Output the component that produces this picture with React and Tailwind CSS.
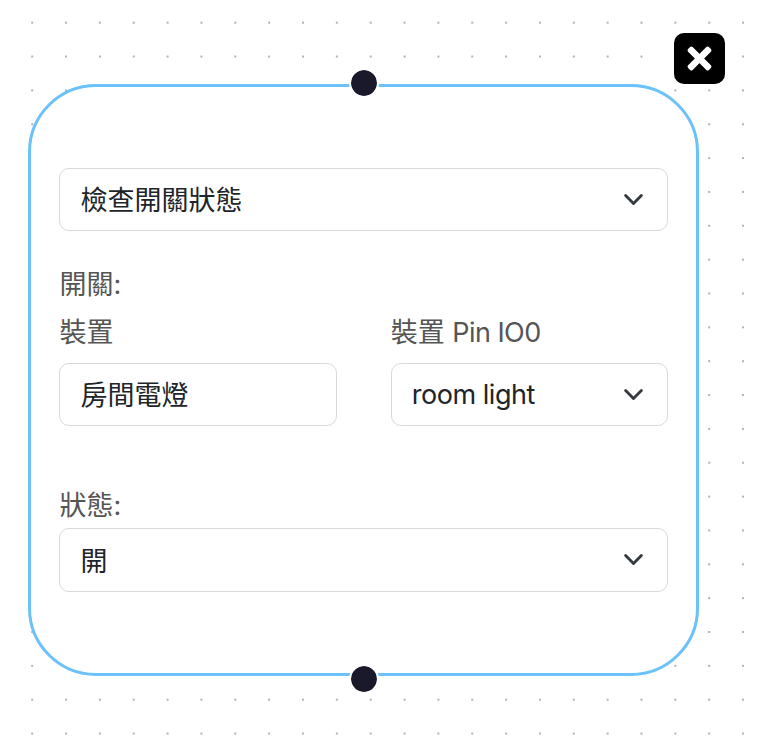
const fontStack = "font-['Inter','Noto_Sans_CJK_TC',sans-serif]";

function Chevron() {
  return (
    <svg className="-mt-px h-[21px] w-[21px] shrink-0" viewBox="0 0 16 16" fill="none">
      <path d="m2 5 6 6 6-6" stroke="#343a40" strokeWidth="2.2" strokeLinecap="round" strokeLinejoin="round" />
    </svg>
  );
}

function Field({ value, select, latin, className }) {
  return (
    <div className={`flex items-center justify-between rounded-[10px] border-[1.4px] border-[#d6d9de] bg-white pr-[23px] pl-5 text-[#212529] ${className}`}>
      <span className={`whitespace-nowrap ${latin ? "pt-0.5 tracking-[-0.45px]" : "pt-1"}`}>{value}</span>
      {select && <Chevron />}
    </div>
  );
}

function Label({ children }) {
  return <div className="h-10 pt-px leading-10 whitespace-nowrap text-[#555]">{children}</div>;
}

function DotGrid() {
  return (
    <svg className="absolute inset-0 h-full w-full">
      <pattern id="dots" x="31.2" y="21.7" width="33.85" height="33.85" patternUnits="userSpaceOnUse">
        <circle cx="1" cy="1" r="1" fill="#989898" />
      </pattern>
      <rect width="100%" height="100%" fill="url(#dots)" />
    </svg>
  );
}

function Handle() {
  return <div className="h-[30px] w-[30px] rounded-full border-2 border-white bg-[#1a192b] bg-clip-padding" />;
}

export default function App() {
  return (
    <div className={`relative h-[742px] w-[762px] overflow-hidden bg-white text-[27px] ${fontStack}`}>
      <DotGrid />
      <section className="absolute top-[84px] left-[28.4px] flex h-[592px] w-[670.6px] flex-col justify-between rounded-[68px] border-[3px] border-[#6bc2fa] bg-white px-7 pt-[81px] pb-[81px]">
        <Field value="檢查開關狀態" select className="h-[63px]" />
        <div className="-mt-[26px] flex flex-col gap-2">
          <Label>開關:</Label>
          <div className="grid grid-cols-2 gap-[54px]">
            <div className="flex flex-col gap-[11px]">
              <Label>裝置</Label>
              <Field value="房間電燈" className="h-[63px]" />
            </div>
            <div className="flex flex-col gap-[11px]">
              <Label>
                裝置 <span className="tracking-[-0.55px]">Pin IO0</span>
              </Label>
              <Field value="room light" select latin className="h-[63px]" />
            </div>
          </div>
        </div>
        <div className="flex flex-col gap-[3px]">
          <Label>狀態:</Label>
          <Field value="開" select className="h-16" />
        </div>
      </section>
      <div className="absolute top-[68px] left-0 flex h-[626px] w-[728px] flex-col items-center justify-between">
        <Handle />
        <Handle />
      </div>
      <button className="absolute top-[33px] left-[673.5px] flex h-[51px] w-[51px] items-center justify-center rounded-[10px] bg-black">
        <svg className="h-[25px] w-[25px] overflow-visible" viewBox="0 0 25 25" fill="#fff">
          <rect x="-2.2" y="9.3" width="29.4" height="6.4" rx="1.8" transform="rotate(45 12.5 12.5)" />
          <rect x="-2.2" y="9.3" width="29.4" height="6.4" rx="1.8" transform="rotate(-45 12.5 12.5)" />
        </svg>
      </button>
    </div>
  );
}
